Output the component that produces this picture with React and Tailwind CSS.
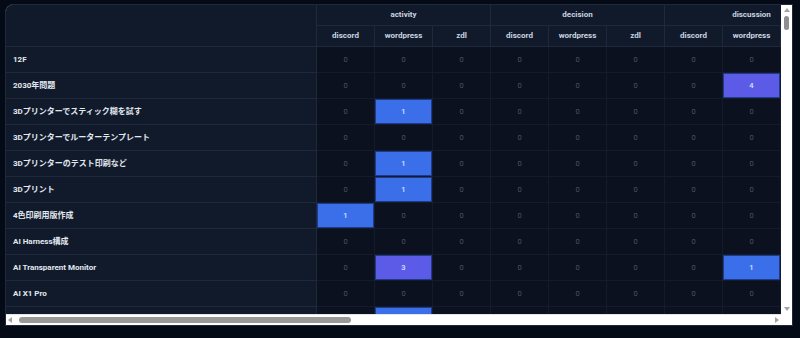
const groups = ["activity", "decision", "discussion"];
const sources = ["discord", "wordpress", "zdl"];

// non-zero counts keyed by "group:source"
const rows = [
  { label: "12F", v: {} },
  { label: "2030年問題", v: { "discussion:wordpress": 4 } },
  { label: "3Dプリンターでスティック糊を試す", v: { "activity:wordpress": 1 } },
  { label: "3Dプリンターでルーターテンプレート", v: {} },
  { label: "3Dプリンターのテスト印刷など", v: { "activity:wordpress": 1 } },
  { label: "3Dプリント", v: { "activity:wordpress": 1 } },
  { label: "4色印刷用版作成", v: { "activity:discord": 1 } },
  { label: "AI Harness構成", v: {} },
  { label: "AI Transparent Monitor", v: { "activity:wordpress": 3, "discussion:wordpress": 1 } },
  { label: "AI X1 Pro", v: {} },
  { label: "", v: { "activity:wordpress": 1 } },
];

function Cell({ value }) {
  if (!value) {
    return (
      <div className="flex h-[26px] items-center justify-center border-r border-b border-[#141c2b] text-[7.5px] text-[#4a5568]">
        0
      </div>
    );
  }
  return (
    <div className="h-[26px] border-r border-b border-[#141c2b]">
      <div
        className={`flex h-[25px] items-center justify-center border border-[#1e3a8a] text-[7.5px] font-medium text-[#dbe4ff] ${
          value >= 3 ? "bg-[#5b5be8]" : "bg-[#3b6fe9]"
        }`}
      >
        {value}
      </div>
    </div>
  );
}

function Arrow({ dir }) {
  const pts = {
    up: "0,4 3,0 6,4",
    down: "0,0 6,0 3,4",
    left: "4,0 4,6 0,3",
    right: "0,0 0,6 4,3",
  }[dir];
  const size = dir === "up" || dir === "down" ? [6, 4] : [4, 6];
  return (
    <svg width={size[0]} height={size[1]} viewBox={`0 0 ${size[0]} ${size[1]}`} className="shrink-0">
      <polygon points={pts} fill="#a3a3a3" />
    </svg>
  );
}

export default function App() {
  return (
    <div className="h-[338px] w-[800px] overflow-hidden bg-[#050a17] pl-[5px] pt-1" style={{ fontFamily: 'Roboto, "Noto Sans CJK JP", sans-serif' }}>
      <div className="grid h-[322px] w-[788px] grid-cols-[775px_11px] grid-rows-[309px_11px] overflow-hidden rounded-tl-lg border border-[#1e293b] bg-white">
        {/* table viewport */}
        <div className="overflow-hidden bg-[#0b111e]">
          <div className="grid w-max grid-cols-[311px_repeat(9,58px)]">
            <div className="row-span-2 border-r border-b border-[#1e293b] bg-[#111a2b]"></div>
            {groups.map((g) => (
              <div key={g} className="col-span-3 flex h-[21px] items-center justify-center border-r border-b border-[#1e293b] bg-[#111a2b] text-[8px] font-bold text-[#cbd5e1]">
                {g}
              </div>
            ))}
            {groups.flatMap((g) =>
              sources.map((s) => (
                <div key={g + s} className="flex h-[21px] items-center justify-center border-r border-b border-[#1e293b] bg-[#111a2b] text-[8px] font-bold text-[#cbd5e1]">
                  {s}
                </div>
              ))
            )}
            {rows.map((r, i) => (
              <div key={i} className="contents">
                <div className="flex h-[26px] items-center truncate border-r border-b border-[#1e293b] bg-[#111a2b] pl-[7px] text-[8px] font-bold text-[#e2e8f0]">
                  {r.label}
                </div>
                {groups.flatMap((g) =>
                  sources.map((s) => <Cell key={g + s} value={r.v[`${g}:${s}`]} />)
                )}
              </div>
            ))}
          </div>
        </div>

        {/* vertical scrollbar */}
        <div className="flex flex-col items-center bg-white pt-[3px] pb-[3px]">
          <Arrow dir="up" />
          <div className="mt-[4px] h-[14px] w-[5px] rounded-full bg-[#8f8f8f]"></div>
          <div className="flex-1"></div>
          <Arrow dir="down" />
        </div>

        {/* horizontal scrollbar */}
        <div className="flex items-center border-t border-[#e5e5e5] bg-white pl-[2px] pr-[2px]">
          <Arrow dir="left" />
          <div className="ml-[7px] h-[6px] w-[332px] rounded-full bg-[#999999]"></div>
          <div className="flex-1"></div>
          <Arrow dir="right" />
        </div>
        <div className="bg-white"></div>
      </div>
    </div>
  );
}
